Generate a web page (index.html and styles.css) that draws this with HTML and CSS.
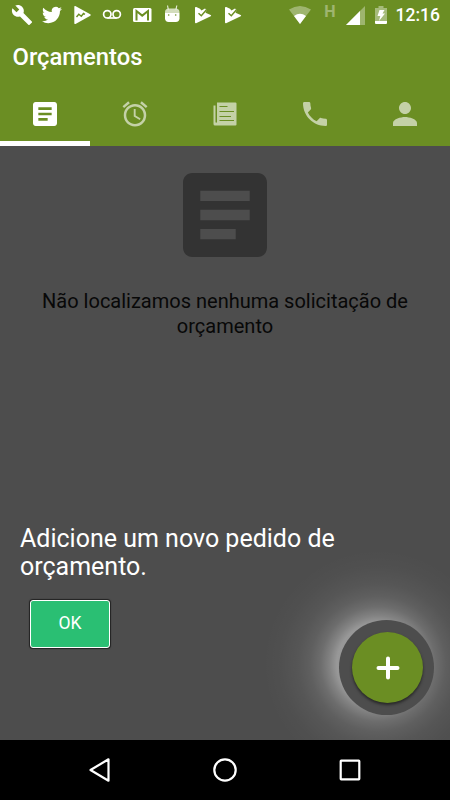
FILE: index.html
```html
<!DOCTYPE html>
<html lang="pt-BR">
  <head>
    <meta charset="UTF-8" />
    <meta name="viewport" content="width=device-width, initial-scale=1.0" />
    <title>Orçamentos</title>
    <link rel="stylesheet" href="styles.css">
  </head>
  <body>
    <div class="screen">
      <header class="header">
        <div class="status-bar">
          <div class="notifications">
            <svg width="22" height="22" viewBox="0 0 24 24"><path d="M22.7 19l-9.1-9.1c.9-2.3.4-5-1.5-6.9-2-2-5-2.4-7.4-1.3L9 6 6 9 1.6 4.7C.4 7.1.9 10.1 2.9 12.1c1.9 1.9 4.6 2.4 6.900 1.500l9.100 9.100c.4.4 1 .4 1.400 0l2.300-2.300c.5-.4.5-1.100.1-1.400z"/></svg>
            <svg width="20" height="20" viewBox="0 0 24 24"><path d="M23.95 4.57a10 10 0 0 1-2.82.77 4.96 4.96 0 0 0 2.16-2.72c-.95.55-2 .96-3.13 1.18a4.92 4.92 0 0 0-8.38 4.48C7.69 8.09 4.07 6.13 1.64 3.16a4.82 4.82 0 0 0-.67 2.48c0 1.71.87 3.21 2.19 4.1a4.9 4.9 0 0 1-2.23-.62v.06a4.92 4.92 0 0 0 3.95 4.83 5 5 0 0 1-2.21.08 4.94 4.94 0 0 0 4.6 3.42A9.87 9.87 0 0 1 0 19.54a13.99 13.99 0 0 0 7.55 2.21c9.05 0 14-7.5 14-13.98 0-.21 0-.42-.02-.63a9.94 9.94 0 0 0 2.46-2.55z"/></svg>
            <svg width="20" height="20" viewBox="0 0 20 20"><path d="M2.300 1.800q0-1.200 1-.8L18.300 9.300q1 .7 0 1.400L3.500 18.900q-1.200.5-1.200-.6z"/><path class="cut" stroke-width="1.400" d="M4.500 12l2.300-2.700 2.500 2 2.200-2.800 1.500.8"/></svg>
            <svg width="20" height="20" viewBox="0 0 20 20"><g class="line" stroke-width="1.700"><circle cx="5.300" cy="9.300" r="3.700"/><circle cx="14.700" cy="9.300" r="3.700"/><path d="M5.300 13h9.400"/></g></svg>
            <svg width="20" height="20" viewBox="0 0 20 20"><rect x="1" y="3" width="18.500" height="14" rx="1.500"/><path class="cut" stroke-width="2" d="M4.500 15.500V6l5.700 4.600L16 6v9.500"/></svg>
            <svg width="20" height="20" viewBox="0 0 20 20"><path d="M3 8h14.500v5.300q0 3.700-3.700 3.700H6.700Q3 17 3 13.300z"/><path opacity=".7" d="M3 7q0-3.500 4-3.500h6.500q4 0 4 3.500v1H3z"/><path class="line" stroke-width="1.200" opacity=".8" d="M6.300 4.500L5.500.5M14 4.500l.8-4"/><circle class="hole" cx="6.700" cy="10" r=".8"/><circle class="hole" cx="13.700" cy="10" r=".8"/></svg>
            <svg width="20" height="20" viewBox="0 0 20 20"><path d="M3 3q0-1.500 1.300-.9l3.700 1.700L9.500 5.500l3.500-2 1.700 1.700-1.200 2.600 5.200 2.200q1 .6 0 1.300L4.600 18q-1.600.6-1.600-.8z"/><path class="cut" stroke-width="1.500" d="M6.500 8.200l2.800 2.500 5.200-6"/></svg>
            <svg width="20" height="20" viewBox="0 0 20 20"><path d="M3 3q0-1.500 1.300-.9l3.700 1.700L9.500 5.500l3.500-2 1.700 1.700-1.200 2.600 5.200 2.200q1 .6 0 1.300L4.600 18q-1.600.6-1.600-.8z"/><path class="cut" stroke-width="1.500" d="M6.500 8.200l2.800 2.500 5.200-6"/></svg>
          </div>
          <div class="system">
            <svg width="22" height="18" viewBox="0 0 22 18"><path opacity=".35" d="M0 3.500Q11-3.500 22 3.500L11 18z"/><path d="M5 10q6-4.500 12 0l-6 8z"/></svg>
            <span class="network">H</span>
            <svg class="signal" width="19" height="19" viewBox="0 0 19 19"><path opacity=".35" d="M19 0v19H0z"/><path d="M14 5v14H0z"/></svg>
            <svg class="battery" width="12" height="18" viewBox="0 0 12 18"><path opacity=".4" d="M3.500 0h5v2H12v13H0V2h3.500z"/><path d="M0 15h12v2q0 1-1 1H1q-1 0-1-1zM4.500 4h5L7.500 7.500H10L4 15l1.300-5H2.500z"/></svg>
            <span class="clock">12:16</span>
          </div>
        </div>
        <h1 class="title">Orçamentos</h1>
        <nav class="tabs">
          <a class="tab active"><svg width="32" height="32" viewBox="0 0 24 24"><path d="M19 3H5c-1.100 0-2 .9-2 2v14c0 1.100.9 2 2 2h14c1.100 0 2-.9 2-2V5c0-1.100-.9-2-2-2zm-5 14H7v-2h7v2zm3-4H7v-2h10v2zm0-4H7V7h10v2z"/></svg></a>
          <a class="tab"><svg width="30" height="30" viewBox="0 0 24 24"><path d="M22 5.720l-4.600-3.860-1.290 1.530 4.600 3.860L22 5.720zM7.880 3.390L6.600 1.860 2 5.710l1.290 1.530 4.590-3.850zM12.500 8H11v6l4.750 2.850.75-1.230-4-2.370V8zM12 4c-4.970 0-9 4.030-9 9s4.020 9 9 9a9 9 0 0 0 0-18zm0 16c-3.870 0-7-3.130-7-7s3.130-7 7-7 7 3.130 7 7-3.130 7-7 7z"/></svg></a>
          <a class="tab"><svg width="24" height="24" viewBox="0 0 24 24"><path d="M4 .5h18.500q1 0 1 1v21q0 1-1 1H2q-1.500 0-1.500-1.500V3.500h2V20q0 .8.700.8t.8-.8z"/><path class="cut" stroke-width="1" d="M6.500 4.500h8M6.500 9.500H21M6.500 14.500H18M6.500 18.500H21"/></svg></a>
          <a class="tab"><svg width="32" height="32" viewBox="0 0 24 24"><path d="M6.620 10.790c1.440 2.830 3.760 5.140 6.590 6.590l2.200-2.200c.27-.27.67-.36 1.020-.24 1.120.37 2.330.57 3.570.57.550 0 1 .45 1 1V20c0 .55-.45 1-1 1-9.390 0-17-7.610-17-17 0-.55.45-1 1-1h3.500c.55 0 1 .45 1 1 0 1.250.2 2.450.57 3.570.11.35.03.74-.25 1.020l-2.200 2.200z"/></svg></a>
          <a class="tab"><svg width="36" height="36" viewBox="0 0 24 24"><path d="M12 12c2.210 0 4-1.790 4-4s-1.790-4-4-4-4 1.790-4 4 1.790 4 4 4zm0 2c-2.670 0-8 1.340-8 4v2h16v-2c0-2.660-5.330-4-8-4z"/></svg></a>
        </nav>
      </header>

      <main class="content">
        <div class="empty">
          <svg class="empty-icon" width="112" height="112" viewBox="0 0 24 24"><path d="M19 3H5c-1.100 0-2 .9-2 2v14c0 1.100.9 2 2 2h14c1.100 0 2-.9 2-2V5c0-1.100-.9-2-2-2zm-4.700 14.200H6.700V15h7.600v2.200zm3-4.100H6.700v-2.200h10.600v2.200zm0-4.100H6.700V6.800h10.600V9z"/></svg>
          <p class="empty-text">Não localizamos nenhuma solicitação de orçamento</p>
        </div>
        <div class="coach">
          <p class="coach-text">Adicione um novo pedido de orçamento.</p>
          <button class="ok">OK</button>
        </div>
        <div class="halo"></div>
        <div class="ring">
          <button class="fab" aria-label="Adicionar">
            <svg width="24" height="24" viewBox="0 0 24 24"><path class="line" stroke-width="4" stroke-linecap="round" d="M12 2.500v19M2.500 12h19"/></svg>
          </button>
        </div>
      </main>

      <footer class="navbar">
        <svg width="24" height="26" viewBox="0 0 24 26"><path class="line" stroke-linejoin="round" d="M20.500 2.300v21.400L2.500 13z"/></svg>
        <svg width="26" height="26" viewBox="0 0 26 26"><circle class="line" cx="13" cy="13" r="10.700"/></svg>
        <svg width="24" height="24" viewBox="0 0 24 24"><rect class="line" x="2.700" y="2.700" width="18.600" height="18.600" rx=".5"/></svg>
      </footer>
    </div>
  </body>
</html>
```

FILE: styles.css
```css
* {
  box-sizing: border-box;
  margin: 0;
  padding: 0;
}

body {
  font-family: Roboto, sans-serif;
  background: #000;
}

svg {
  display: block;
  fill: #fff;
  stroke-width: 2.2;
  flex-shrink: 0;
}

.line {
  fill: none;
  stroke: #fff;
}

.cut {
  fill: none;
  stroke: #6b8e23;
}

.hole {
  fill: #6b8e23;
}

.screen {
  width: 450px;
  height: 800px;
  display: flex;
  flex-direction: column;
  overflow: hidden;
}

.header {
  height: 146px;
  background: #6b8e23;
  color: #fff;
  display: flex;
  flex-direction: column;
}

.status-bar {
  height: 30px;
  display: flex;
  justify-content: space-between;
  padding: 0 10px 0 7px;
}

.notifications {
  display: grid;
  grid-template-columns: repeat(8, 30px);
  place-items: center;
}

.system {
  display: flex;
  align-items: center;
}

.network {
  font-size: 16px;
  font-weight: 700;
  line-height: 16px;
  opacity: 0.35;
  margin: 0 10px 7px 13px;
}

.battery {
  margin: 0 9px 0 10px;
}

.clock {
  font-size: 17.5px;
  font-weight: 500;
  line-height: 32px;
}

.title {
  height: 52px;
  padding-left: 12.5px;
  font-size: 23.8px;
  font-weight: 500;
  line-height: 54px;
}

.tabs {
  height: 64px;
  display: grid;
  grid-template-columns: repeat(5, 1fr);
}

.tab {
  display: flex;
  align-items: center;
  justify-content: center;
}

.tab svg {
  opacity: 0.6;
}

.tab.active {
  box-shadow: inset 0 -5px #fff;
}

.tab.active svg {
  opacity: 1;
}

.content {
  position: relative;
  height: 594px;
  background: #4d4d4d;
  overflow: hidden;
  display: flex;
  flex-direction: column;
  justify-content: space-between;
}

.empty {
  padding: 13px 30px 0;
  display: flex;
  flex-direction: column;
  align-items: center;
}

.empty-icon {
  fill: #333;
}

.empty-text {
  margin-top: 18px;
  font-size: 20px;
  line-height: 25px;
  text-align: center;
  color: #080808;
}

.coach {
  width: 360px;
  padding: 0 0 92px 20px;
  color: #fff;
}

.coach-text {
  font-size: 25px;
  line-height: 28px;
}

.ok {
  display: block;
  width: 80px;
  height: 48px;
  margin: 19px 0 0 10px;
  padding-bottom: 3px;
  font: 17.5px Roboto, sans-serif;
  color: #fff;
  background: #2abf73;
  border: 1.5px solid #fff;
  border-radius: 3px;
  box-shadow: 0 0 1px 1px #222;
}

.halo {
  position: absolute;
  right: -43px;
  bottom: -39px;
  width: 230px;
  height: 230px;
  background: radial-gradient(circle closest-side, rgba(255, 255, 255, 0.42) 36%, rgba(255, 255, 255, 0.3) 42%, rgba(255, 255, 255, 0.18) 50%, rgba(255, 255, 255, 0.1) 59%, rgba(255, 255, 255, 0.05) 70%, rgba(255, 255, 255, 0.015) 85%, transparent);
}

.ring {
  position: absolute;
  right: 16px;
  bottom: 25px;
  width: 95px;
  height: 95px;
  border-radius: 50%;
  background: #4d4d4d;
  display: flex;
  align-items: center;
  justify-content: center;
}

.fab {
  width: 71px;
  height: 71px;
  margin-left: 2px;
  border: none;
  border-radius: 50%;
  background: #6b8e23;
  box-shadow: 0 2px 3px rgba(0, 0, 0, 0.5);
  display: flex;
  align-items: center;
  justify-content: center;
}

.navbar {
  height: 60px;
  background: #000;
  display: grid;
  grid-template-columns: repeat(3, 125px);
  justify-content: center;
  place-items: center;
}
```
